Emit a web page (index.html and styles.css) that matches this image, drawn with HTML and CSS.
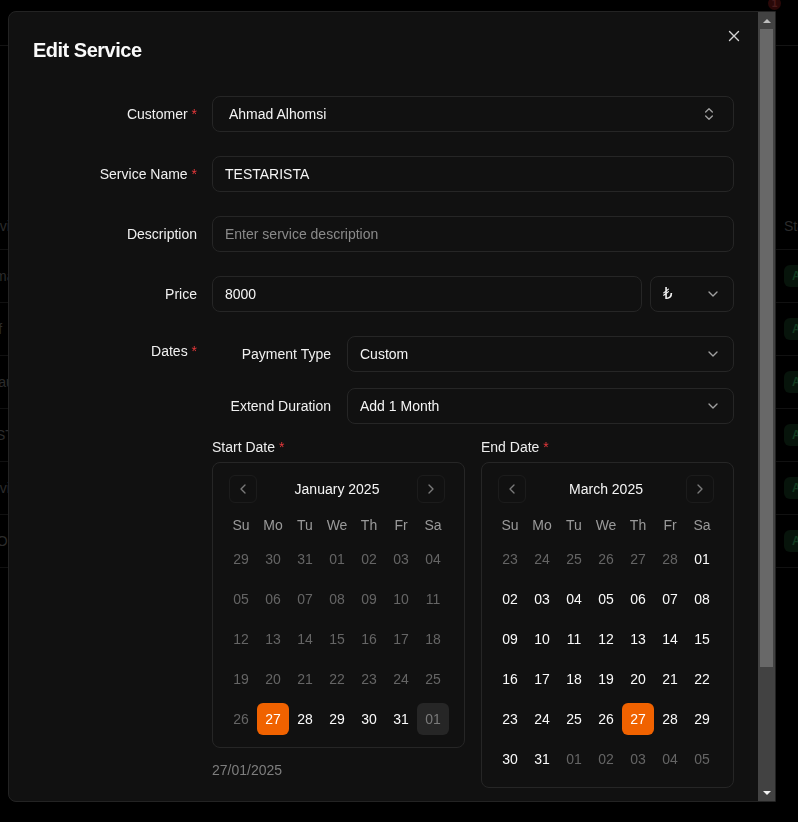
FILE: index.html
```html
<!DOCTYPE html>
<html lang="en">
<head>
<meta charset="utf-8">
<title>Edit Service</title>
<link rel="stylesheet" href="styles.css">
</head>
<body>
<div class="page">
  <div class="topbar"><span class="notif">1</span></div>
  <div class="bg-table">
    <div class="bg-row bg-head"><span class="bg-l">Service</span><span class="bg-r">Status</span></div>
    <div class="bg-row"><span class="bg-l">Ahmad Alhomsi</span><span class="bg-r"><span class="bg-badge">Active</span></span></div>
    <div class="bg-row"><span class="bg-l">Self</span><span class="bg-r"><span class="bg-badge">Active</span></span></div>
    <div class="bg-row"><span class="bg-l">Alhaus</span><span class="bg-r"><span class="bg-badge">Active</span></span></div>
    <div class="bg-row"><span class="bg-l">TESTAR</span><span class="bg-r"><span class="bg-badge">Active</span></span></div>
    <div class="bg-row"><span class="bg-l">Servi</span><span class="bg-r"><span class="bg-badge">Active</span></span></div>
    <div class="bg-row"><span class="bg-l">SEO S</span><span class="bg-r"><span class="bg-badge">Active</span></span></div>
  </div>
</div>

<div class="modal">
  <div class="modal-body">
    <button class="close" aria-label="Close">
      <svg width="12" height="12" viewBox="0 0 12 12" fill="none" stroke="currentColor" stroke-width="1.4" stroke-linecap="round"><path d="M1.5 1.5l9 9M10.5 1.5l-9 9"/></svg>
    </button>
    <h2 class="title">Edit Service</h2>

    <div class="form">
      <label class="label">Customer <span class="req">*</span></label>
      <div class="control select select-wide">
        <span>Ahmad Alhomsi</span>
        <svg class="ico" width="16" height="16" viewBox="0 0 24 24" fill="none" stroke="currentColor" stroke-width="2" stroke-linecap="round" stroke-linejoin="round"><path d="m7 15 5 5 5-5"/><path d="m7 9 5-5 5 5"/></svg>
      </div>

      <label class="label">Service Name <span class="req">*</span></label>
      <div class="control">TESTARISTA</div>

      <label class="label">Description</label>
      <div class="control placeholder">Enter service description</div>

      <label class="label">Price</label>
      <div class="price">
        <div class="control grow">8000</div>
        <div class="control select currency">
          <span class="lira">₺</span>
          <svg class="ico" width="16" height="16" viewBox="0 0 24 24" fill="none" stroke="currentColor" stroke-width="2" stroke-linecap="round" stroke-linejoin="round"><path d="m6 9 6 6 6-6"/></svg>
        </div>
      </div>

      <label class="label label-top">Dates <span class="req">*</span></label>
      <div class="dates">
        <div class="sub">
          <label class="sub-label">Payment Type</label>
          <div class="control select">
            <span>Custom</span>
            <svg class="ico" width="16" height="16" viewBox="0 0 24 24" fill="none" stroke="currentColor" stroke-width="2" stroke-linecap="round" stroke-linejoin="round"><path d="m6 9 6 6 6-6"/></svg>
          </div>
          <label class="sub-label">Extend Duration</label>
          <div class="control select">
            <span>Add 1 Month</span>
            <svg class="ico" width="16" height="16" viewBox="0 0 24 24" fill="none" stroke="currentColor" stroke-width="2" stroke-linecap="round" stroke-linejoin="round"><path d="m6 9 6 6 6-6"/></svg>
          </div>
        </div>

        <div class="cals">
          <div class="cal-col">
            <div class="cal-title">Start Date <span class="req">*</span></div>
            <div class="cal">
              <div class="cal-inner">
                <div class="cal-head">
                  <button class="nav"><svg width="16" height="16" viewBox="0 0 24 24" fill="none" stroke="currentColor" stroke-width="2" stroke-linecap="round" stroke-linejoin="round"><path d="m15 18-6-6 6-6"/></svg></button>
                  <span class="month">January 2025</span>
                  <button class="nav"><svg width="16" height="16" viewBox="0 0 24 24" fill="none" stroke="currentColor" stroke-width="2" stroke-linecap="round" stroke-linejoin="round"><path d="m9 18 6-6-6-6"/></svg></button>
                </div>
                <div class="week wd"><span>Su</span><span>Mo</span><span>Tu</span><span>We</span><span>Th</span><span>Fr</span><span>Sa</span></div>
                <div class="week"><span class="d off">29</span><span class="d off">30</span><span class="d off">31</span><span class="d off">01</span><span class="d off">02</span><span class="d off">03</span><span class="d off">04</span></div>
                <div class="week"><span class="d off">05</span><span class="d off">06</span><span class="d off">07</span><span class="d off">08</span><span class="d off">09</span><span class="d off">10</span><span class="d off">11</span></div>
                <div class="week"><span class="d off">12</span><span class="d off">13</span><span class="d off">14</span><span class="d off">15</span><span class="d off">16</span><span class="d off">17</span><span class="d off">18</span></div>
                <div class="week"><span class="d off">19</span><span class="d off">20</span><span class="d off">21</span><span class="d off">22</span><span class="d off">23</span><span class="d off">24</span><span class="d off">25</span></div>
                <div class="week"><span class="d off">26</span><span class="d sel">27</span><span class="d">28</span><span class="d">29</span><span class="d">30</span><span class="d">31</span><span class="d off today">01</span></div>
              </div>
            </div>
            <div class="cal-value">27/01/2025</div>
          </div>

          <div class="cal-col">
            <div class="cal-title">End Date <span class="req">*</span></div>
            <div class="cal">
              <div class="cal-inner">
                <div class="cal-head">
                  <button class="nav"><svg width="16" height="16" viewBox="0 0 24 24" fill="none" stroke="currentColor" stroke-width="2" stroke-linecap="round" stroke-linejoin="round"><path d="m15 18-6-6 6-6"/></svg></button>
                  <span class="month">March 2025</span>
                  <button class="nav"><svg width="16" height="16" viewBox="0 0 24 24" fill="none" stroke="currentColor" stroke-width="2" stroke-linecap="round" stroke-linejoin="round"><path d="m9 18 6-6-6-6"/></svg></button>
                </div>
                <div class="week wd"><span>Su</span><span>Mo</span><span>Tu</span><span>We</span><span>Th</span><span>Fr</span><span>Sa</span></div>
                <div class="week"><span class="d off">23</span><span class="d off">24</span><span class="d off">25</span><span class="d off">26</span><span class="d off">27</span><span class="d off">28</span><span class="d">01</span></div>
                <div class="week"><span class="d">02</span><span class="d">03</span><span class="d">04</span><span class="d">05</span><span class="d">06</span><span class="d">07</span><span class="d">08</span></div>
                <div class="week"><span class="d">09</span><span class="d">10</span><span class="d">11</span><span class="d">12</span><span class="d">13</span><span class="d">14</span><span class="d">15</span></div>
                <div class="week"><span class="d">16</span><span class="d">17</span><span class="d">18</span><span class="d">19</span><span class="d">20</span><span class="d">21</span><span class="d">22</span></div>
                <div class="week"><span class="d">23</span><span class="d">24</span><span class="d">25</span><span class="d">26</span><span class="d sel">27</span><span class="d">28</span><span class="d">29</span></div>
                <div class="week"><span class="d">30</span><span class="d">31</span><span class="d off">01</span><span class="d off">02</span><span class="d off">03</span><span class="d off">04</span><span class="d off">05</span></div>
              </div>
            </div>
            <div class="cal-value">27/03/2025</div>
          </div>
        </div>
      </div>
    </div>

    <div class="footer">
      <button class="btn btn-ghost">Cancel</button>
      <button class="btn btn-primary">Update Service</button>
    </div>
  </div>

  <div class="scrollbar" aria-hidden="true">
    <span class="sb-btn"><span class="arrow-up"></span></span>
    <span class="sb-track"><span class="sb-thumb"></span></span>
    <span class="sb-btn"><span class="arrow-down"></span></span>
  </div>
</div>
</body>
</html>
```

FILE: styles.css
```css
* { box-sizing: border-box; }

html, body {
  margin: 0;
  height: 100%;
  background: #000;
  font-family: "Liberation Sans", Arial, sans-serif;
  font-size: 14px;
  color: #ededed;
  overflow: hidden;
}

/* dimmed page behind the dialog */
.page {
  height: 100%;
  color: #2e2e2e;
}
.topbar {
  height: 46px;
  border-bottom: 1px solid #141414;
  position: relative;
}
.notif {
  position: absolute;
  left: 768px;
  top: -3px;
  width: 13px;
  height: 13px;
  border-radius: 50%;
  background: #2a0808;
  color: #4a1c1c;
  font-size: 10px;
  font-weight: bold;
  display: flex;
  align-items: center;
  justify-content: center;
}
.bg-table {
  margin-top: 156px;
}
.bg-row {
  height: 53px;
  display: flex;
  align-items: center;
  border-bottom: 1px solid #111;
}
.bg-head { height: 48px; }
.bg-l {
  margin-left: -22px;
  white-space: nowrap;
  font-size: 14px;
  color: #2c2c2c;
}
.bg-r {
  margin-left: auto;
  width: 14px;
  white-space: nowrap;
  overflow: visible;
  color: #2c2c2c;
}
.bg-badge {
  display: inline-block;
  padding: 4px 8px;
  border-radius: 6px;
  background: #07140b;
  color: #123a20;
  font-weight: bold;
  font-size: 12px;
}

/* dialog */
.modal {
  position: fixed;
  left: 8px;
  top: 11px;
  width: 768px;
  height: 791px;
  background: #111111;
  border: 1px solid #232323;
  border-radius: 8px 0 0 8px;
  display: flex;
}
.modal-body {
  flex: 1;
  min-width: 0;
  overflow: hidden;
  padding: 24px;
}
.scrollbar {
  width: 17px;
  flex: none;
  background: #424242;
  display: flex;
  flex-direction: column;
}
.sb-btn {
  height: 17px;
  flex: none;
  display: flex;
  align-items: center;
  justify-content: center;
}
.arrow-up {
  width: 0;
  height: 0;
  border-left: 4px solid transparent;
  border-right: 4px solid transparent;
  border-bottom: 4px solid #bdbdbd;
}
.arrow-down {
  width: 0;
  height: 0;
  border-left: 4px solid transparent;
  border-right: 4px solid transparent;
  border-top: 4px solid #f2f2f2;
}
.sb-track {
  flex: 1;
  padding: 0 2px;
}
.sb-thumb {
  display: block;
  height: 638px;
  background: #686868;
}

.close {
  position: absolute;
  top: 16px;
  right: 33px;
  width: 16px;
  height: 16px;
  padding: 0;
  border: 0;
  background: none;
  color: #d4d4d4;
  display: flex;
  align-items: center;
  justify-content: center;
}
.title {
  margin: 0 0 32px 0;
  font-size: 20px;
  line-height: 28px;
  font-weight: bold;
  letter-spacing: -0.5px;
  color: #fafafa;
}

.form {
  display: grid;
  grid-template-columns: 164px 1fr;
  column-gap: 15px;
  row-gap: 24px;
  align-items: center;
}
.label {
  text-align: right;
  line-height: 20px;
  color: #f0f0f0;
}
.label-top {
  align-self: start;
  padding-top: 5px;
}
.req { color: #e5383b; }

.control {
  height: 36px;
  border: 1px solid #262626;
  border-radius: 8px;
  background: #111111;
  padding: 0 12px;
  display: flex;
  align-items: center;
  color: #f5f5f5;
  white-space: nowrap;
}
.placeholder { color: #8a8a8a; }
.select { justify-content: space-between; padding-right: 12px; }
.select-wide { padding-left: 16px; padding-right: 16px; }
.ico { color: #a0a0a0; flex: none; }

.price {
  display: flex;
  gap: 8px;
}
.grow { flex: 1; }
.currency { width: 84px; }
.lira { font-family: "DejaVu Sans", sans-serif; font-size: 15px; }

.dates {
  display: flex;
  flex-direction: column;
}
.sub {
  display: grid;
  grid-template-columns: 119px 1fr;
  column-gap: 16px;
  row-gap: 16px;
  align-items: center;
}
.sub-label {
  text-align: right;
  color: #f0f0f0;
}

.cals {
  margin-top: 13px;
  display: grid;
  grid-template-columns: 1fr 1fr;
  column-gap: 16px;
  align-items: start;
}
.cal-title {
  line-height: 20px;
  margin-bottom: 5px;
}
.cal {
  border: 1px solid #262626;
  border-radius: 8px;
  padding: 12px;
}
.cal-inner { width: 224px; }
.cal-head {
  height: 28px;
  padding: 0 4px;
  display: flex;
  align-items: center;
  justify-content: space-between;
}
.month {
  font-weight: 500;
  color: #f5f5f5;
}
.nav {
  width: 28px;
  height: 28px;
  padding: 0;
  border: 1px solid #1c1c1c;
  border-radius: 6px;
  background: transparent;
  color: #7a7a7a;
  display: flex;
  align-items: center;
  justify-content: center;
}
.week {
  display: grid;
  grid-template-columns: repeat(7, 32px);
  margin-top: 8px;
}
.wd {
  margin-top: 12px;
  margin-bottom: 1px;
  height: 20px;
  align-items: center;
}
.wd span {
  text-align: center;
  color: #9a9a9a;
}
.d {
  height: 32px;
  border-radius: 6px;
  display: flex;
  align-items: center;
  justify-content: center;
  color: #fafafa;
}
.d.off { color: #656565; }
.d.sel { background: #f06200; color: #fff; }
.d.today { background: #262626; color: #7a7a7a; }

.cal-value {
  margin-top: 12px;
  line-height: 20px;
  color: #7e7e7e;
}

.footer {
  margin-top: 64px;
  display: flex;
  justify-content: flex-end;
  gap: 8px;
}
.btn {
  height: 36px;
  padding: 0 16px;
  border-radius: 8px;
  font: inherit;
}
.btn-ghost {
  background: transparent;
  border: 1px solid #262626;
  color: #ededed;
}
.btn-primary {
  background: #f06200;
  border: 0;
  color: #fff;
}
```
